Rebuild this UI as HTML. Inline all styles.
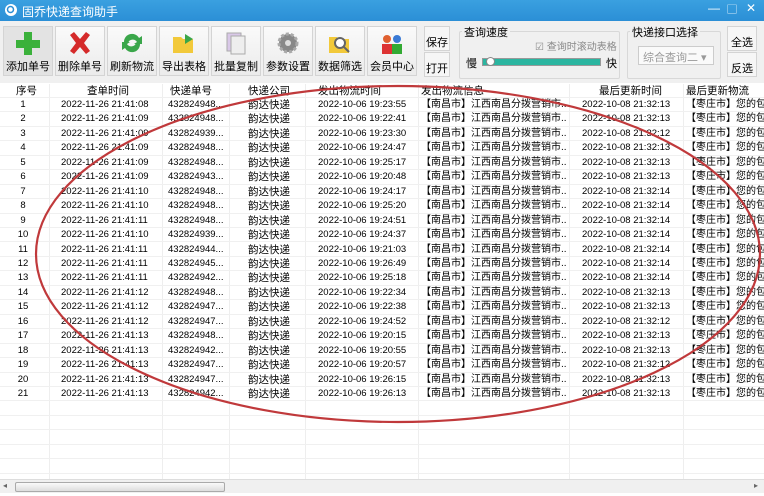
<!DOCTYPE html>
<html><head><meta charset="utf-8"><style>
*{margin:0;padding:0;box-sizing:border-box}
body{width:764px;height:496px;overflow:hidden;background:#fff;font-family:"Liberation Sans","Noto Sans CJK SC",sans-serif;font-size:11px;color:#000;position:relative}
.title{position:absolute;left:0;top:0;width:764px;height:21px;background:linear-gradient(#3aa0e0,#2b8fd6);color:#fff;font-size:12px}
.title span{position:absolute;left:22px;top:3px}
.tb{position:absolute;top:21px;left:0;width:764px;height:62px;background:#f0f0f0}
.btn{position:absolute;top:5px;width:50px;height:50px;border:1px solid #d4d4d4;background:linear-gradient(#fafafa,#ebebeb);text-align:center;font-size:11px}
.btn .ic{width:26px;height:24px;margin:4px auto 3px}
.sb{position:absolute;width:26px;height:25px;border:1px solid #d4d4d4;background:#f6f6f6;font-size:11px;text-align:center;line-height:32px}
.grp{position:absolute;border:1px solid #d8d8d8;border-radius:2px}
.grp b{position:absolute;top:-8px;left:2px;background:#f0f0f0;font-weight:normal;padding:0 2px}
.r{position:absolute;left:0;width:764px;height:14.45px;border-bottom:1px solid #f0f0f0;font-size:9.5px;line-height:14px;white-space:nowrap}
.r div{position:absolute;top:0;height:14px;overflow:hidden}
.vl{position:absolute;top:84px;height:395px;width:1px;background:#eeeeee}
.h{font-size:10.5px}
</style></head><body>
<div class="title"><svg style="position:absolute;left:4px;top:3px" width="14" height="14"><circle cx="7" cy="7" r="6" fill="#fff"/><circle cx="6.5" cy="6.5" r="3" fill="none" stroke="#2b8fd6" stroke-width="1.5"/></svg><span>固乔快递查询助手</span>
<span style="left:708px;top:1px">—</span><span style="left:727px;top:1px;font-size:10px">▢</span><span style="left:746px;top:1px">✕</span></div>
<div class="tb">
<div class="btn" style="left:3px;background:#e3e3e3"><div class="ic"><svg width="26" height="24"><path d="M9 1h8v8h8v8h-8v7H9v-7H1V9h8z" fill="#3bb13b"/></svg></div>添加单号</div>
<div class="btn" style="left:55px"><div class="ic"><svg width="26" height="24"><path d="M3 4l4-3 6 7 6-7 4 3-6 8 6 8-4 3-6-7-6 7-4-3 6-8z" fill="#d52a2a"/></svg></div>删除单号</div>
<div class="btn" style="left:107px"><div class="ic"><svg width="26" height="24"><path d="M5 11a8 8 0 0 1 15-4l3-2v8h-8l3-2a5 5 0 0 0-9 1zM21 13a8 8 0 0 1-15 4l-3 2v-8h8l-3 2a5 5 0 0 0 9-1z" fill="#3aa64a"/></svg></div>刷新物流</div>
<div class="btn" style="left:159px"><div class="ic"><svg width="26" height="24"><path d="M2 6h8l2 2h10v14H2z" fill="#f2c93a"/><path d="M14 3l8 5-8 5z" fill="#3aa64a"/></svg></div>导出表格</div>
<div class="btn" style="left:211px"><div class="ic"><svg width="26" height="24"><rect x="4" y="2" width="14" height="18" fill="#d9c8e8" stroke="#aaa"/><rect x="8" y="5" width="14" height="18" fill="#eee" stroke="#aaa"/></svg></div>批量复制</div>
<div class="btn" style="left:263px"><div class="ic"><svg width="26" height="24"><circle cx="13" cy="12" r="9" fill="#888" stroke="#aaa" stroke-width="3" stroke-dasharray="3 2"/><circle cx="13" cy="12" r="3" fill="#ddd"/></svg></div>参数设置</div>
<div class="btn" style="left:315px"><div class="ic"><svg width="26" height="24"><path d="M2 6h8l2 2h10v14H2z" fill="#f2c93a"/><circle cx="13" cy="12" r="5" fill="#fff" stroke="#666" stroke-width="2"/><path d="M17 16l5 5" stroke="#666" stroke-width="2"/></svg></div>数据筛选</div>
<div class="btn" style="left:367px"><div class="ic"><svg width="26" height="24"><circle cx="8" cy="8" r="4" fill="#e06030"/><circle cx="18" cy="8" r="4" fill="#3a7ad5"/><rect x="3" y="13" width="10" height="10" fill="#d33"/><rect x="13" y="13" width="10" height="10" fill="#3a3"/></svg></div>会员中心</div>
<div class="sb" style="left:424px;top:5px">保存</div>
<div class="sb" style="left:424px;top:31px">打开</div>
<div class="grp" style="left:459px;top:10px;width:161px;height:48px"><b>查询速度</b>
<span style="position:absolute;left:75px;top:6px;color:#888;font-size:10px">☑ 查询时滚动表格</span>
<span style="position:absolute;left:6px;top:23px">慢</span>
<div style="position:absolute;left:22px;top:26px;width:119px;height:8px;background:#2bb5a0;border:1px solid #999"><div style="position:absolute;left:3px;top:-2px;width:9px;height:9px;border-radius:50%;background:#fff;border:1px solid #888"></div></div>
<span style="position:absolute;left:146px;top:23px">快</span></div>
<div class="grp" style="left:627px;top:10px;width:94px;height:48px"><b>快递接口选择</b>
<div style="position:absolute;left:10px;top:14px;width:76px;height:19px;border:1px solid #ccc;background:#fafafa;color:#999;font-size:11px;padding:2px 4px">综合查询二 ▾</div></div>
<div class="sb" style="left:727px;top:5px;width:30px">全选</div>
<div class="sb" style="left:727px;top:31px;width:30px">反选</div>
</div>
<div id="g"></div>
<div style="position:absolute;left:0;top:479px;width:764px;height:14px;background:#f0f0f0;border-top:1px solid #ddd">
<span style="position:absolute;left:3px;top:1px;font-size:8px;color:#666">◂</span>
<div style="position:absolute;left:15px;top:2px;width:210px;height:10px;background:linear-gradient(#fafafa,#ddd);border:1px solid #aaa;border-radius:2px"></div>
<span style="position:absolute;left:754px;top:1px;font-size:8px;color:#666">▸</span></div>
<svg style="position:absolute;left:0;top:0" width="764" height="496"><ellipse cx="398" cy="254" rx="362" ry="168" fill="none" stroke="#c0393b" stroke-width="2.2"/></svg>
<script>
var q=["08","09","09","09","09","09","10","10","11","10","11","11","11","12","12","12","13","13","13","13","13"],
n=["4948","4948","4939","4948","4948","4943","4948","4948","4948","4939","4944","4945","4942","4948","4947","4947","4948","4942","4947","4947","4942"],
s=["23:55","22:41","23:30","24:47","25:17","20:48","24:17","25:20","24:51","24:37","21:03","26:49","25:18","22:34","22:38","24:52","20:15","20:55","20:57","26:15","26:13"],
u=["13","13","12","13","13","13","14","14","14","14","14","14","14","13","13","12","13","13","12","13","13"],h="";
[49,162,229,305,418,569,683].forEach(function(x){h+='<div class="vl" style="left:'+x+'px"></div>'});
h+='<div class="r h" style="top:84px"><div style="left:16px">序号</div><div style="left:87px">查单时间</div><div style="left:170px">快递单号</div><div style="left:248px">快递公司</div><div style="left:318px">发出物流时间</div><div style="left:421px">发出物流信息</div><div style="left:599px">最后更新时间</div><div style="left:686px">最后更新物流</div></div>';
for(var i=0;i<26;i++){var t=(98+i*14.45).toFixed(2);
if(i>=21){h+='<div class="r" style="top:'+t+'px"></div>';continue;}
h+='<div class="r" style="top:'+t+'px"><div style="left:0;width:46px;text-align:center">'+(i+1)+'</div><div style="left:61px">2022-11-26 21:41:'+q[i]+'</div><div style="left:168px">43282'+n[i]+'...</div><div style="left:248px;font-size:10.5px">韵达快递</div><div style="left:318px">2022-10-06 19:'+s[i]+'</div><div style="left:421px;font-size:10px;width:146px">【南昌市】江西南昌分拨营销市...</div><div style="left:582px">2022-10-08 21:32:'+u[i]+'</div><div style="left:686px;font-size:10px">【枣庄市】您的包</div></div>';}
document.getElementById('g').innerHTML=h;
</script>
</body></html>
